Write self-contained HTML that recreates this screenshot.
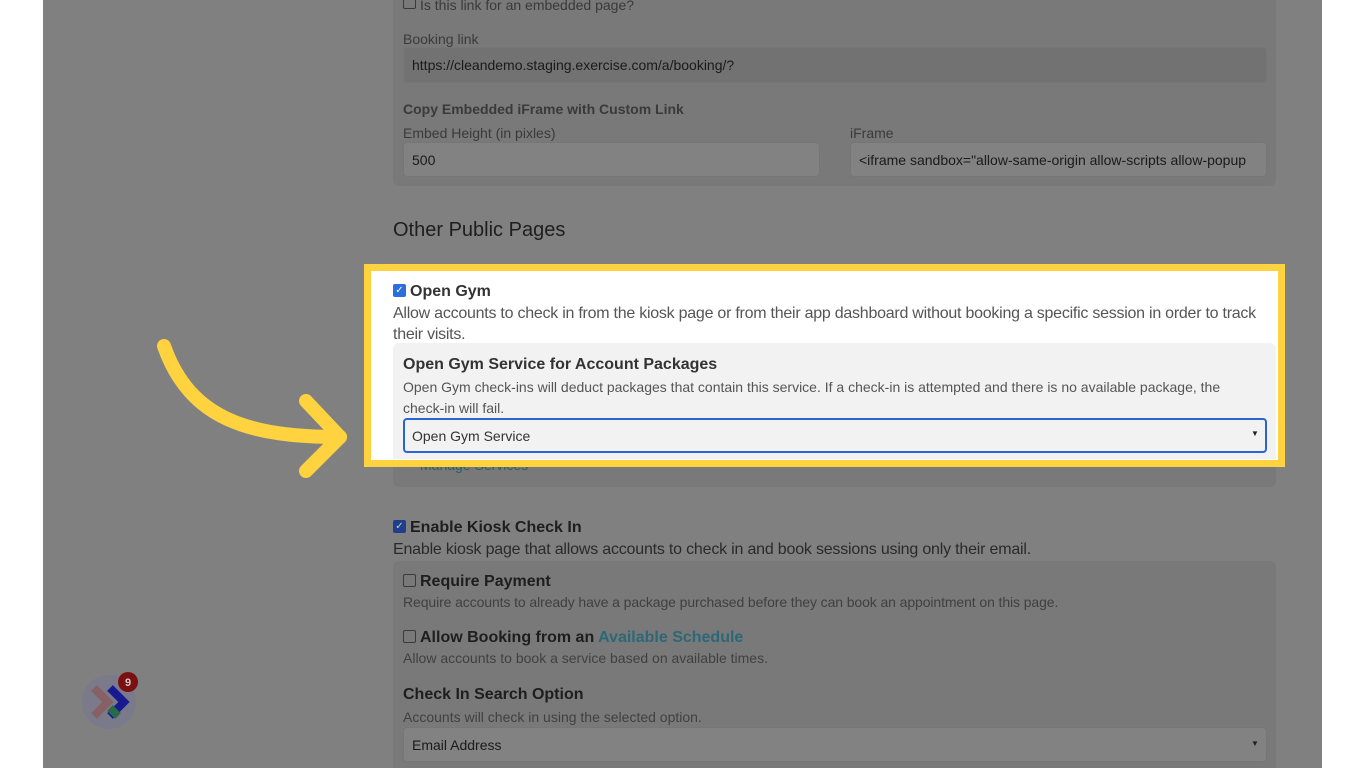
<!DOCTYPE html>
<html style="width:1366px;height:768px;overflow:hidden"><head><meta charset="utf-8"><style>
*{box-sizing:border-box;margin:0;padding:0}
body{width:1366px;height:768px;overflow:hidden;background:#fff;font-family:"Liberation Sans",Arial,sans-serif;position:relative}
.ov{position:absolute;left:43px;top:0;width:1279px;height:768px;background:#808080}
.a{position:absolute;white-space:nowrap}
.panel{position:absolute;background:#797979;border-radius:6px}
.inp{position:absolute;border:1px solid #767676;border-radius:4px;background:#828282;font-size:14px;color:#1a1a1a;padding-left:8px;display:flex;align-items:center}
.lbl{font-size:14px;color:#3a3a3a}
.cb{position:absolute;width:13px;height:13px;border:1px solid #3a3a3a;border-radius:2px}
.cbc{position:absolute;width:13px;height:13px;border-radius:2px;background:#1f3f8a;color:#ccc;font-size:10px;line-height:13px;text-align:center}
</style></head><body>
<div class="ov"></div>
<div class="panel" style="left:393px;top:-10px;width:883px;height:196px"></div>
<div class="cb" style="left:403px;top:-4px"></div>
<div class="a lbl" style="left:420px;top:-3px;font-size:14px">Is this link for an embedded page?</div>
<div class="a lbl" style="left:403px;top:31px">Booking link</div>
<div class="inp" style="left:403px;top:47px;width:864px;height:36px;background:#727272">https://cleandemo.staging.exercise.com/a/booking/?</div>
<div class="a lbl" style="left:403px;top:101px;font-weight:bold">Copy Embedded iFrame with Custom Link</div>
<div class="a lbl" style="left:403px;top:125px">Embed Height (in pixles)</div>
<div class="inp" style="left:403px;top:142px;width:417px;height:35px">500</div>
<div class="a lbl" style="left:850px;top:125px">iFrame</div>
<div class="inp" style="left:850px;top:142px;width:417px;height:35px;overflow:hidden">&lt;iframe sandbox="allow-same-origin allow-scripts allow-popup</div>
<div class="a" style="left:393px;top:219px;font-size:20px;color:#1e1e1e">Other Public Pages</div>

<div class="panel" style="left:393px;top:420px;width:883px;height:67px"></div>
<div class="a" style="left:420px;top:457px;font-size:14px;color:#2b5e6b">Manage Services</div>

<div style="position:absolute;left:364px;top:264px;width:921px;height:203px;border:7px solid #ffd23f;background:#fff"></div>
<div style="position:absolute;left:393px;top:343px;width:883px;height:116px;background:#f2f2f2;border-radius:6px 6px 0 0"></div>
<div class="cbc" style="left:393px;top:284px;background:#2a6fdb;color:#fff">✓</div>
<div class="a" style="left:410px;top:283px;font-size:16px;font-weight:bold;color:#333">Open Gym</div>
<div class="a" style="left:393px;top:303px;font-size:16px;color:#555;line-height:21px;white-space:normal;width:880px;letter-spacing:-0.25px">Allow accounts to check in from the kiosk page or from their app dashboard without booking a specific session in order to track their visits.</div>
<div class="a" style="left:403px;top:356px;font-size:16px;font-weight:bold;color:#333">Open Gym Service for Account Packages</div>
<div class="a" style="left:403px;top:377px;font-size:14px;color:#555;line-height:21px;white-space:normal;width:860px">Open Gym check-ins will deduct packages that contain this service. If a check-in is attempted and there is no available package, the check-in will fail.</div>
<div class="inp" style="left:403px;top:418px;width:864px;height:35px;border:2px solid #2a64d6;background:#f2f2f2;color:#333;padding-left:7px">Open Gym Service</div>
<div class="a" style="left:1251px;top:429px;font-size:8px;color:#222">▼</div>

<svg style="position:absolute;left:0;top:0" width="400" height="500"><g fill="none" stroke="#ffd23f" stroke-width="14" stroke-linecap="round" stroke-linejoin="round"><path d="M164 346 C190 420 250 437 340 437"/><path d="M306 401 L340 437 L306 471"/></g></svg>

<div class="cbc" style="left:393px;top:520px">✓</div>
<div class="a" style="left:410px;top:519px;font-size:16px;font-weight:bold;color:#1e1e1e">Enable Kiosk Check In</div>
<div class="a" style="left:393px;top:541px;font-size:16px;color:#2a2a2a;letter-spacing:-0.2px">Enable kiosk page that allows accounts to check in and book sessions using only their email.</div>
<div class="panel" style="left:393px;top:561px;width:883px;height:207px;border-radius:6px 6px 0 0"></div>
<div class="cb" style="left:403px;top:574px"></div>
<div class="a" style="left:420px;top:573px;font-size:16px;font-weight:bold;color:#1e1e1e">Require Payment</div>
<div class="a" style="left:403px;top:594px;font-size:14px;color:#404040;letter-spacing:-0.1px">Require accounts to already have a package purchased before they can book an appointment on this page.</div>
<div class="cb" style="left:403px;top:630px"></div>
<div class="a" style="left:420px;top:629px;font-size:16px;font-weight:bold;color:#1e1e1e">Allow Booking from an <span style="color:#2b6878">Available Schedule</span></div>
<div class="a" style="left:403px;top:650px;font-size:14px;color:#404040">Allow accounts to book a service based on available times.</div>
<div class="a" style="left:403px;top:686px;font-size:16px;font-weight:bold;color:#1e1e1e">Check In Search Option</div>
<div class="a" style="left:403px;top:709px;font-size:14px;color:#404040">Accounts will check in using the selected option.</div>
<div class="inp" style="left:403px;top:727px;width:864px;height:35px">Email Address</div>
<div class="a" style="left:1251px;top:739px;font-size:8px;color:#222">▼</div>

<svg style="position:absolute;left:78px;top:668px" width="70" height="70"><circle cx="31" cy="34" r="27" fill="#7a7a8a"/><path d="M16 20 L30 34 L16 48" stroke="#8a5a5a" stroke-width="8" fill="none" opacity=".8"/><path d="M32 20 L46 34 L32 48" stroke="#1a1a90" stroke-width="8" fill="none"/><path d="M32 40 L40 48" stroke="#2a6a4a" stroke-width="8"/><circle cx="50" cy="14" r="10" fill="#7a1010"/><text x="50" y="18" font-size="11" font-weight="bold" fill="#ccc" text-anchor="middle" font-family="Liberation Sans">9</text></svg>
</body></html>
